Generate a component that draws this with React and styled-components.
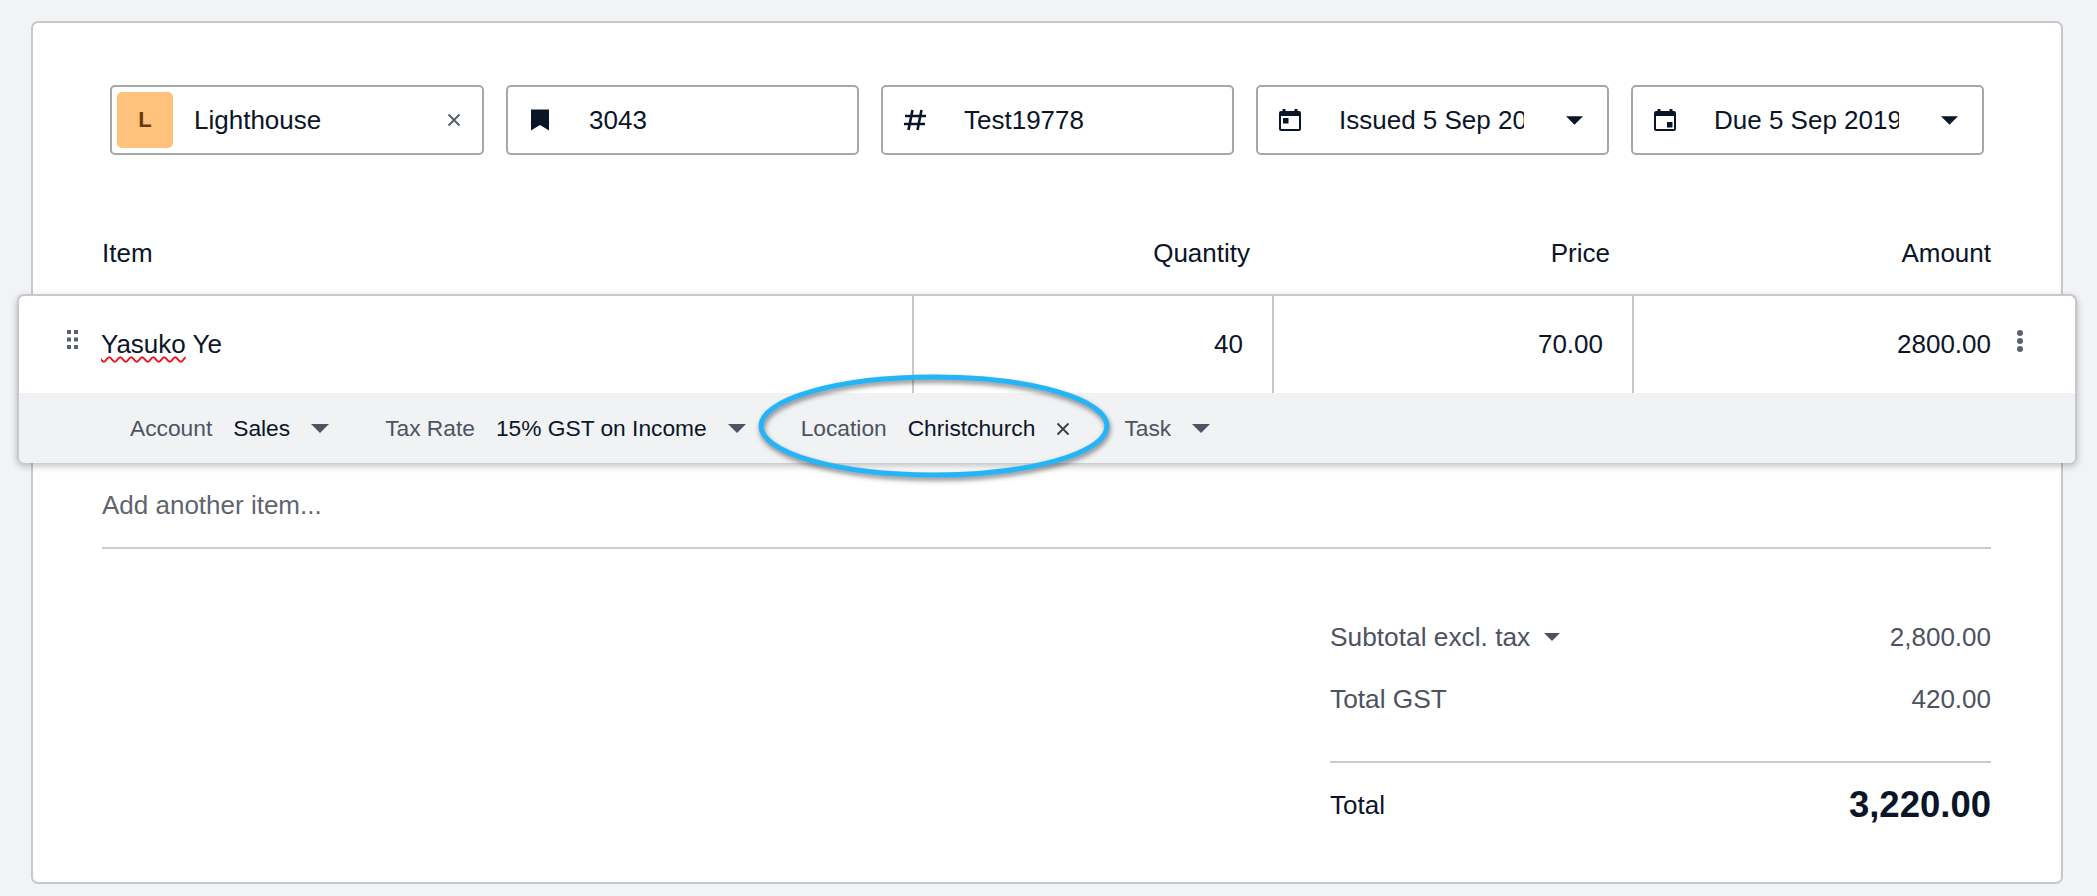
import React from "react";
import styled, { createGlobalStyle } from "styled-components";

const GlobalStyle = createGlobalStyle`
  html, body {
    margin: 0;
    padding: 0;
    background: #f2f3f5;
  }
  body {
    font-family: "Liberation Sans", Arial, sans-serif;
    color: #0b1528;
  }
`;

const Page = styled.div`
  box-sizing: border-box;
  height: 896px;
  padding: 21px 34px 12px 31px;
  display: flex;
`;

const Card = styled.div`
  box-sizing: border-box;
  flex: 1;
  display: flex;
  flex-direction: column;
  background: #fff;
  border: 2px solid #c6c8cd;
  border-radius: 7px;
  padding-top: 62px;
`;

const FieldRow = styled.div`
  display: grid;
  grid-template-columns: 374px repeat(4, 353px);
  column-gap: 22px;
  margin-left: 77px;
`;

const Field = styled.div`
  box-sizing: border-box;
  height: 70px;
  display: flex;
  align-items: center;
  padding: 0 ${(p) => (p.$compact ? "21px" : "24px")} 0 ${(p) => (p.$compact ? "5px" : "20px")};
  border: 2px solid #a4a7ae;
  border-radius: 5px;
  background: #fff;
`;

const Avatar = styled.div`
  width: 56px;
  height: 56px;
  flex: none;
  display: flex;
  align-items: center;
  justify-content: center;
  margin-right: 21px;
  border-radius: 5px;
  background: #ffc27d;
  color: #6b3a08;
  font-size: 22px;
  font-weight: 700;
`;

const FieldIcon = styled.svg`
  width: 24px;
  height: 24px;
  flex: none;
  margin-right: 37px;
  color: #0b1528;
`;

const FieldText = styled.div`
  flex: 1;
  min-width: 0;
  overflow: hidden;
  white-space: nowrap;
  font-size: 26px;
  line-height: 32px;
`;

const Caret = styled.svg`
  flex: none;
  width: ${(p) => p.$w || 18}px;
  height: ${(p) => Math.round((p.$w || 18) / 2)}px;
  margin-left: ${(p) => p.$gap || 0}px;
  color: ${(p) => p.$color || "#0b1528"};
`;

const Cross = styled.svg`
  flex: none;
  width: ${(p) => p.$size || 14}px;
  height: ${(p) => p.$size || 14}px;
  margin-left: ${(p) => p.$gap || 0}px;
  color: ${(p) => p.$color || "#565c68"};
`;

const HeaderRow = styled.div`
  display: grid;
  grid-template-columns: 1fr 360px 360px 381px;
  align-items: center;
  height: 46px;
  margin: 75px 70px 18px 69px;
  font-size: 26px;
`;

const HeadCell = styled.div`
  text-align: ${(p) => (p.$right ? "right" : "left")};
`;

const ItemCard = styled.div`
  position: relative;
  box-sizing: border-box;
  margin: 0 -16px;
  height: 169px;
  border: 2px solid #c6c8cd;
  border-bottom-color: #b4b6bc;
  border-radius: 7px;
  background: #fff;
  box-shadow: 0 3px 7px rgba(40, 44, 52, 0.3);
`;

const ItemRow = styled.div`
  display: grid;
  grid-template-columns: 893px 360px 360px 1fr;
  height: 97px;
`;

const ItemCell = styled.div`
  display: flex;
  align-items: center;
  justify-content: flex-end;
  padding-right: 29px;
  font-size: 26px;
  border-left: 2px solid #c6c8cd;
  box-sizing: border-box;
`;

const NameCell = styled.div`
  display: flex;
  align-items: center;
  padding-left: 48px;
  font-size: 26px;
`;

const AmountCell = styled(ItemCell)`
  padding-right: 51px;
`;

const Handle = styled.svg`
  width: 11px;
  height: 19px;
  flex: none;
  margin: -10px 23px 0 0;
  color: #5b616d;
`;

const Misspelt = styled.span`
  text-decoration: underline wavy #e8141c 1.5px;
  text-underline-offset: 3px;
`;

const DotsIcon = styled.svg`
  width: 8px;
  height: 24px;
  flex: none;
  margin: -8px 0 0 25px;
  color: #5b616d;
`;

const TrackingStrip = styled.div`
  display: flex;
  align-items: center;
  height: 70px;
  padding: 1px 0 0 111px;
  box-sizing: border-box;
  background: #f1f2f4;
  border-radius: 0 0 5px 5px;
  font-size: 22.75px;
`;

const TrackingGroup = styled.div`
  display: flex;
  align-items: center;
  margin-right: ${(p) => p.$after || 56}px;
`;

const TrackingLabel = styled.span`
  color: #4d5360;
  margin-right: ${(p) => (p.$solo ? 0 : 21)}px;
`;

const TrackingValue = styled.span`
  color: #0b1528;
`;

const Highlight = styled.svg`
  position: absolute;
  left: 731px;
  top: 78px;
  width: 370px;
  height: 120px;
  overflow: visible;
  pointer-events: none;
  filter: drop-shadow(1px 3px 2.5px rgba(30, 34, 40, 0.55));
`;

const AddRow = styled.div`
  display: flex;
  align-items: center;
  height: 84px;
  margin: 0 70px 0 69px;
  border-bottom: 2px solid #c9cbd0;
  color: #5f6570;
  font-size: 26px;
`;

const Totals = styled.div`
  align-self: flex-end;
  width: 661px;
  margin: 58px 70px 0 0;
  display: flex;
  flex-direction: column;
  gap: 2px;
`;

const TotalLine = styled.div`
  display: flex;
  align-items: center;
  justify-content: space-between;
  height: 60px;
  color: #4d5360;
  font-size: 26px;
`;

const TotalLabel = styled.div`
  display: flex;
  align-items: center;
  font-size: 26.3px;
`;

const GrandLine = styled.div`
  display: flex;
  align-items: center;
  justify-content: space-between;
  height: 84px;
  margin-top: 30px;
  border-top: 2px solid #c9cbd0;
  font-size: 26px;
`;

const GrandValue = styled.div`
  font-size: 36.5px;
  font-weight: 700;
`;

const CaretIcon = (props) => (
  <Caret viewBox="0 0 18 9" {...props}>
    <path d="M0 0h18L9 9z" fill="currentColor" />
  </Caret>
);

const CrossIcon = (props) => (
  <Cross viewBox="0 0 14 14" {...props}>
    <path d="M1.5 1.5l11 11M12.5 1.5l-11 11" stroke="currentColor" strokeWidth="1.9" fill="none" />
  </Cross>
);

const BookmarkIcon = () => (
  <FieldIcon viewBox="0 0 24 24">
    <path d="M3 1.5h18v21l-9-5.5-9 5.5z" fill="currentColor" />
  </FieldIcon>
);

const HashIcon = () => (
  <FieldIcon viewBox="0 0 24 24">
    <path d="M9.5 2L5.5 22M18.5 2l-4 20M2 8h21M1 16h21" stroke="currentColor" strokeWidth="2.6" fill="none" />
  </FieldIcon>
);

const CalendarIcon = ({ late }) => (
  <FieldIcon viewBox="0 0 24 24">
    <path
      d="M4.5 1h3v2h9V1h3v2h1.5A2 2 0 0 1 23 5v16a2 2 0 0 1-2 2H3a2 2 0 0 1-2-2V5a2 2 0 0 1 2-2h1.5zM3 8v13h18V8z"
      fill="currentColor"
      fillRule="evenodd"
    />
    {late ? <rect x="14" y="14" width="5.5" height="5.5" fill="currentColor" /> : <rect x="5" y="10" width="5.5" height="5.5" fill="currentColor" />}
  </FieldIcon>
);

const tracking = [
  { label: "Account", value: "Sales", after: 56 },
  { label: "Tax Rate", value: "15% GST on Income", after: 55 },
];

export default function App() {
  return (
    <>
      <GlobalStyle />
      <Page>
        <Card>
          <FieldRow>
            <Field $compact>
              <Avatar>L</Avatar>
              <FieldText>Lighthouse</FieldText>
              <CrossIcon />
            </Field>
            <Field>
              <BookmarkIcon />
              <FieldText>3043</FieldText>
            </Field>
            <Field>
              <HashIcon />
              <FieldText>Test19778</FieldText>
            </Field>
            <Field>
              <CalendarIcon />
              <FieldText>Issued 5 Sep 2019</FieldText>
              <CaretIcon $w={17} $gap={42} />
            </Field>
            <Field>
              <CalendarIcon late />
              <FieldText>Due 5 Sep 2019</FieldText>
              <CaretIcon $w={17} $gap={42} />
            </Field>
          </FieldRow>

          <HeaderRow>
            <HeadCell>Item</HeadCell>
            <HeadCell $right>Quantity</HeadCell>
            <HeadCell $right>Price</HeadCell>
            <HeadCell $right>Amount</HeadCell>
          </HeaderRow>

          <ItemCard>
            <ItemRow>
              <NameCell>
                <Handle viewBox="0 0 11 19">
                  <path d="M0 0h4v4H0zM7 0h4v4H7zM0 7.5h4v4H0zM7 7.5h4v4H7zM0 15h4v4H0zM7 15h4v4H7z" fill="currentColor" />
                </Handle>
                <span><Misspelt>Yasuko</Misspelt> Ye</span>
              </NameCell>
              <ItemCell>40</ItemCell>
              <ItemCell>70.00</ItemCell>
              <AmountCell>
                2800.00
                <DotsIcon viewBox="0 0 8 24">
                  <circle cx="4" cy="4" r="3" fill="currentColor" />
                  <circle cx="4" cy="12" r="3" fill="currentColor" />
                  <circle cx="4" cy="20" r="3" fill="currentColor" />
                </DotsIcon>
              </AmountCell>
            </ItemRow>
            <TrackingStrip>
              {tracking.map((t) => (
                <TrackingGroup key={t.label} $after={t.after}>
                  <TrackingLabel>{t.label}</TrackingLabel>
                  <TrackingValue>{t.value}</TrackingValue>
                  <CaretIcon $color="#4d5360" $gap={21} />
                </TrackingGroup>
              ))}
              <TrackingGroup $after={54}>
                <TrackingLabel>Location</TrackingLabel>
                <TrackingValue>Christchurch</TrackingValue>
                <CrossIcon $gap={21} $color="#3a404c" />
              </TrackingGroup>
              <TrackingGroup>
                <TrackingLabel $solo>Task</TrackingLabel>
                <CaretIcon $color="#4d5360" $gap={21} />
              </TrackingGroup>
            </TrackingStrip>
            <Highlight viewBox="0 0 370 120">
              <ellipse cx="184" cy="52" rx="173" ry="49" fill="none" stroke="#24b5f8" strokeWidth="5" />
            </Highlight>
          </ItemCard>

          <AddRow>Add another item...</AddRow>

          <Totals>
            <TotalLine>
              <TotalLabel>
                Subtotal excl. tax
                <CaretIcon $w={16} $color="#4d5360" $gap={14} />
              </TotalLabel>
              <div>2,800.00</div>
            </TotalLine>
            <TotalLine>
              <TotalLabel>Total GST</TotalLabel>
              <div>420.00</div>
            </TotalLine>
            <GrandLine>
              <div>Total</div>
              <GrandValue>3,220.00</GrandValue>
            </GrandLine>
          </Totals>
        </Card>
      </Page>
    </>
  );
}
